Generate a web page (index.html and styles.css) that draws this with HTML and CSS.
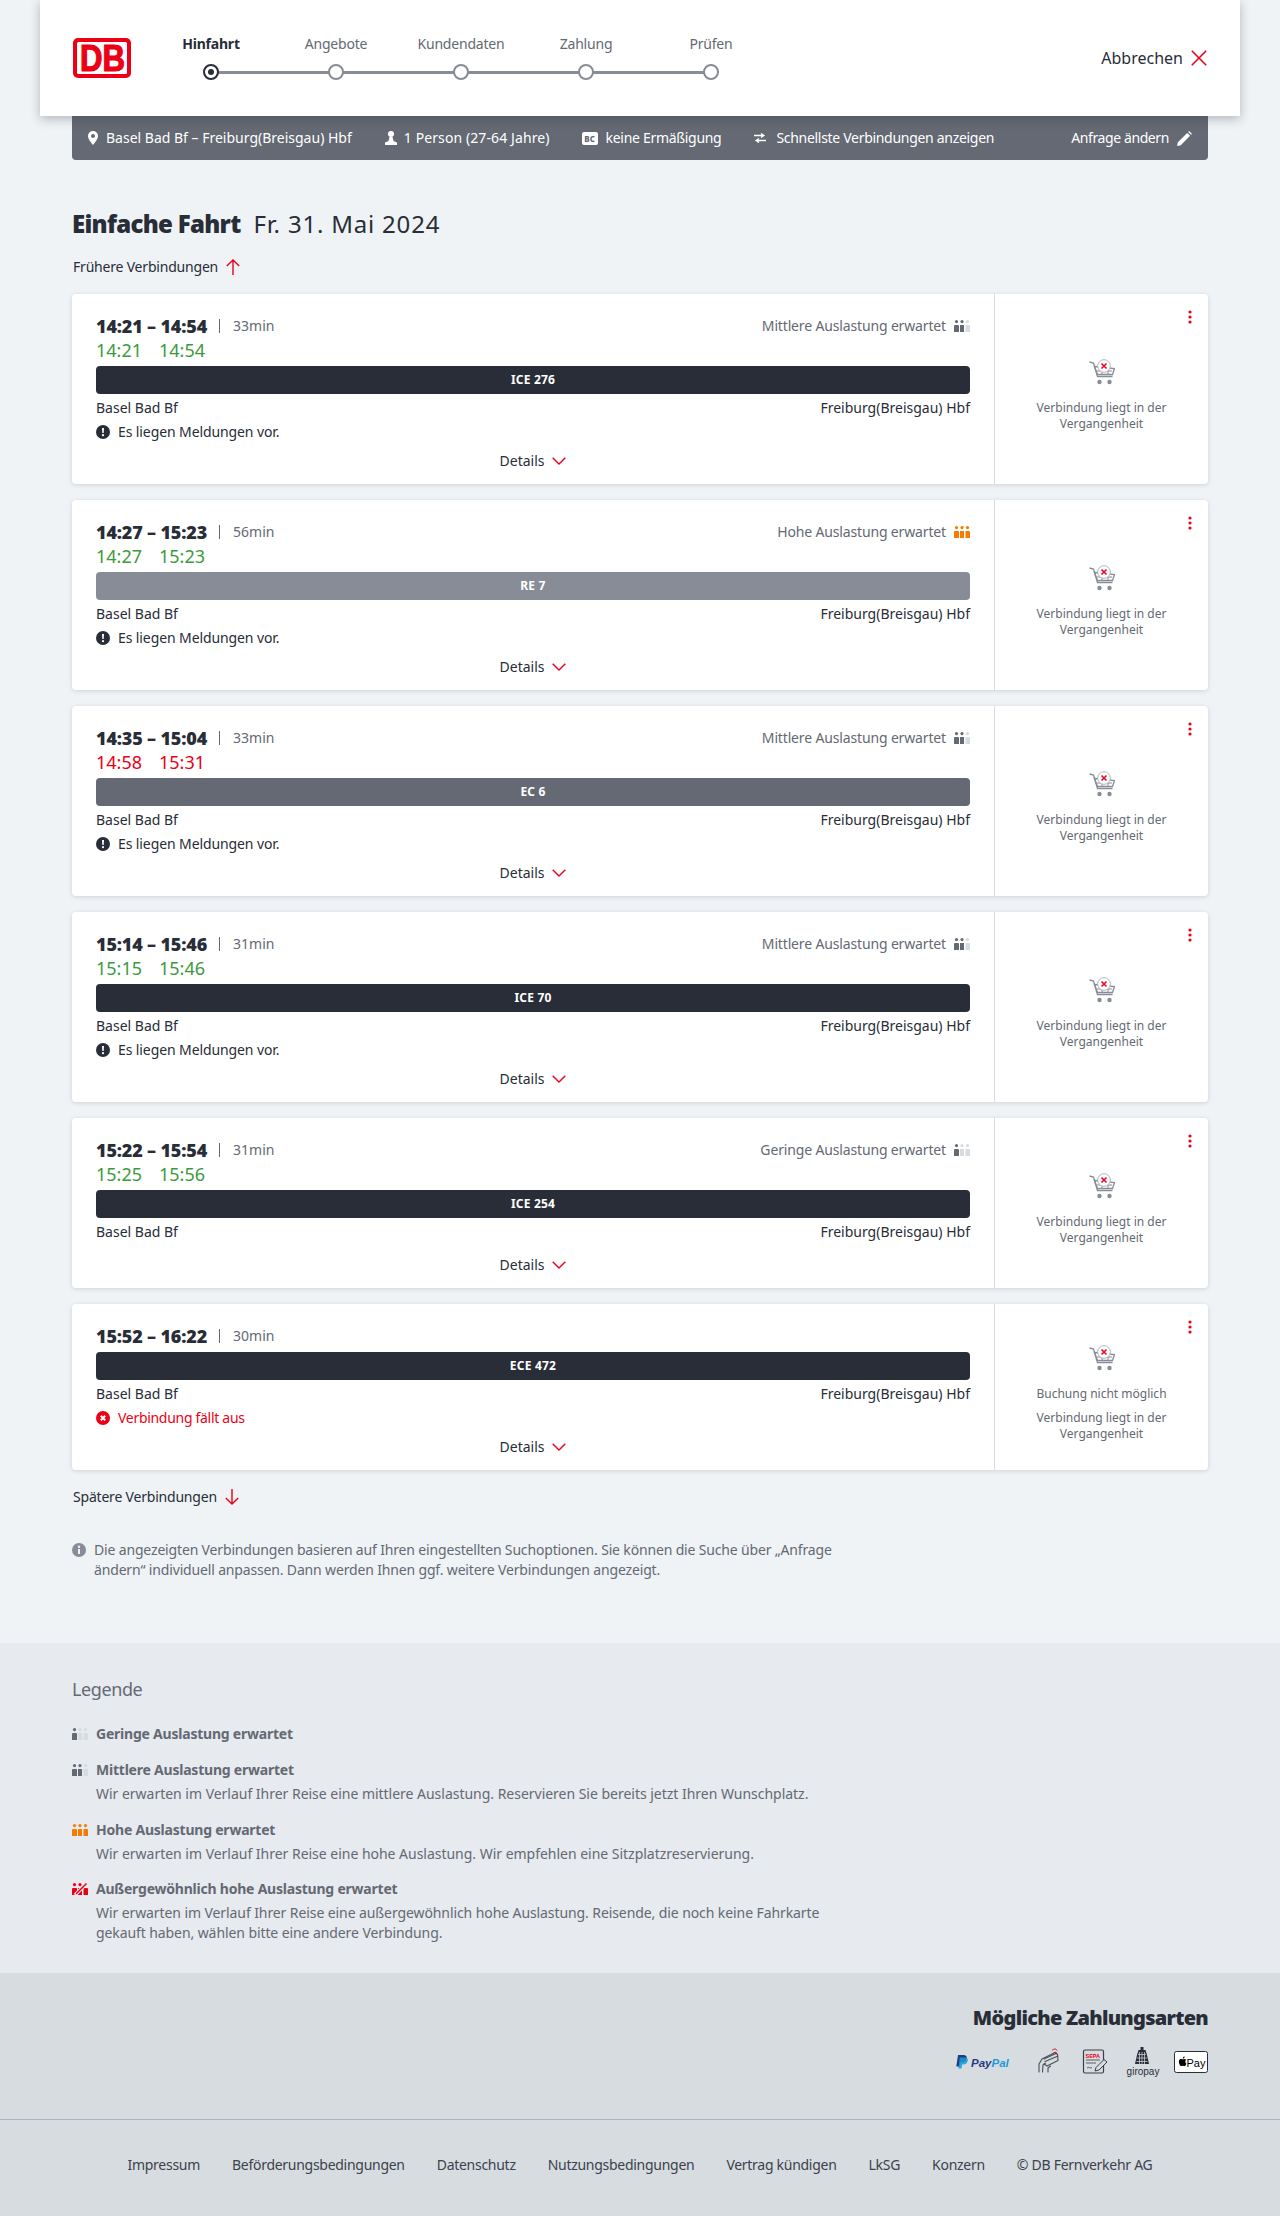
FILE: index.html
```html
<!DOCTYPE html>
<html lang="de">
<head>
<meta charset="utf-8">
<title>Verbindungen</title>
<link rel="stylesheet" href="styles.css">
</head>
<body>
<svg class="sprite" width="0" height="0" aria-hidden="true">
  <defs>
    <symbol id="occ" viewBox="0 0 16 12"><circle cx="2.5" cy="1.6" r="1.6"/><path d="M0 6a1 1 0 0 1 1-1h3a1 1 0 0 1 1 1v6H0z"/></symbol>
    <symbol id="occ2" viewBox="0 0 16 12"><circle cx="8" cy="1.6" r="1.6"/><path d="M6 5h4v7H6z"/></symbol>
    <symbol id="occ3" viewBox="0 0 16 12"><circle cx="13.5" cy="1.6" r="1.6"/><path d="M11.5 5h3.5a1 1 0 0 1 1 1v6h-4.500z"/></symbol>
    <symbol id="cart" viewBox="0 0 26 26">
      <path d="M0.500 3l4 1 4 13.500h15" fill="none" stroke="#878c96" stroke-width="1.300"/>
      <path d="M5.500 7.500l20 2-2 6h-15z" fill="none" stroke="#878c96" stroke-width="1.300"/>
      <path d="M8 12h15M13 9v7M19 9v7" stroke="#878c96" stroke-width="1"/>
      <circle cx="10.500" cy="23" r="2.200" fill="#878c96"/><circle cx="20.500" cy="23" r="2.200" fill="#878c96"/>
      <circle cx="15" cy="7" r="6.300" fill="#fff" stroke="#afb4bb" stroke-width="1"/>
      <path d="M12.500 4.500l5 5M17.500 4.500l-5 5" stroke="#ec0016" stroke-width="1.500"/>
    </symbol>
    <symbol id="chev" viewBox="0 0 14 8"><path d="M.7.8 7 7l6.300-6.200" fill="none" stroke="#ec0016" stroke-width="1.400"/></symbol>
    <symbol id="warn" viewBox="0 0 14 14"><circle cx="7" cy="7" r="7" fill="#282d37"/><path d="M6 3h2l-.3 5H6.300z" fill="#fff"/><circle cx="7" cy="10.200" r="1.100" fill="#fff"/></symbol>
    <symbol id="dots" viewBox="0 0 4 14"><circle cx="2" cy="2" r="1.600"/><circle cx="2" cy="7" r="1.600"/><circle cx="2" cy="12" r="1.600"/></symbol>
  </defs>
</svg>

<header class="top">
  <svg class="logo" viewBox="0 0 58 40" role="img" aria-label="DB">
    <rect width="58" height="40" rx="5" fill="#ec0016"/>
    <rect x="4" y="4" width="50" height="32" rx="1.500" fill="#fff"/>
    <text class="logo-text" x="7" y="33" textLength="45" lengthAdjust="spacingAndGlyphs">DB</text>
  </svg>
  <ol class="steps">
    <li class="step step-active"><span class="step-label">Hinfahrt</span><span class="step-dot"></span></li>
    <li class="step"><span class="step-label">Angebote</span><span class="step-dot"></span></li>
    <li class="step"><span class="step-label">Kundendaten</span><span class="step-dot"></span></li>
    <li class="step"><span class="step-label">Zahlung</span><span class="step-dot"></span></li>
    <li class="step"><span class="step-label">Prüfen</span><span class="step-dot"></span></li>
  </ol>
  <a class="cancel">Abbrechen
    <svg class="cancel-x" viewBox="0 0 16 16"><path d="M.8.8l14.400 14.400M15.200.8.800 15.200" fill="none" stroke="#ec0016" stroke-width="1.600"/></svg>
  </a>
</header>

<div class="query">
  <span class="q-item q-route"><svg class="q-ico-pin" viewBox="0 0 10 14"><path fill-rule="evenodd" fill="#fff" d="M5 0a5 5 0 0 1 5 5c0 3-3 6.500-5 9-2-2.500-5-6-5-9a5 5 0 0 1 5-5zm0 3a2 2 0 1 0 0 4 2 2 0 0 0 0-4z"/></svg>Basel Bad Bf – Freiburg(Breisgau) Hbf</span>
  <span class="q-item q-person"><svg class="q-ico-person" viewBox="0 0 12 14"><circle cx="6" cy="3" r="3" fill="#fff"/><path d="M4.500 6h3l1 4 3.500 1.500V14H0v-2.500L3.500 10z" fill="#fff"/></svg>1 Person (27-64 Jahre)</span>
  <span class="q-item q-bc"><span class="bc">BC</span>keine Ermäßigung</span>
  <span class="q-item q-fast"><svg class="q-ico-swap" viewBox="0 0 12 10"><path d="M0 2.500h9M7 .5l3 2-3 2M12 7.500H3M5 5.500l-3 2 3 2" fill="none" stroke="#fff" stroke-width="1.300"/></svg>Schnellste Verbindungen anzeigen</span>
  <span class="q-edit">Anfrage ändern<svg class="q-ico-pen" viewBox="0 0 14 14"><path d="M0 14l.8-3.500L9.500 1.800l2.700 2.700L3.500 13.200zM10.400.9 11.300 0 14 2.700l-.9.900z" fill="#fff"/></svg></span>
</div>

<main class="main">
  <h1 class="title"><strong>Einfache Fahrt</strong><span class="title-date">Fr. 31. Mai 2024</span></h1>
  <a class="more">Frühere Verbindungen<svg class="arrow" viewBox="0 0 14 16"><path d="M7 16V1M.8 7 7 1l6.200 6" fill="none" stroke="#ec0016" stroke-width="1.400"/></svg></a>

  <section class="results">
    <article class="card">
      <div class="info">
        <div class="row-time"><span class="times">14:21 – 14:54</span><span class="dur">33min</span><span class="load">Mittlere Auslastung erwartet<svg class="occ"><use href="#occ" class="o-d"/><use href="#occ2" class="o-d"/><use href="#occ3" class="o-l"/></svg></span></div>
        <div class="real real-ok"><span>14:21</span><span>14:54</span></div>
        <div class="train train-dark">ICE 276</div>
        <div class="stations"><span>Basel Bad Bf</span><span>Freiburg(Breisgau) Hbf</span></div>
        <div class="msg"><svg class="msg-ico"><use href="#warn"/></svg>Es liegen Meldungen vor.</div>
        <div class="details">Details<svg class="chev"><use href="#chev"/></svg></div>
      </div>
      <aside class="side"><svg class="dots"><use href="#dots"/></svg><svg class="cart"><use href="#cart"/></svg><p class="side-note">Verbindung liegt in der<br>Vergangenheit</p></aside>
    </article>

    <article class="card">
      <div class="info">
        <div class="row-time"><span class="times">14:27 – 15:23</span><span class="dur">56min</span><span class="load">Hohe Auslastung erwartet<svg class="occ"><use href="#occ" class="o-h"/><use href="#occ2" class="o-h"/><use href="#occ3" class="o-h"/></svg></span></div>
        <div class="real real-ok"><span>14:27</span><span>15:23</span></div>
        <div class="train train-light">RE 7</div>
        <div class="stations"><span>Basel Bad Bf</span><span>Freiburg(Breisgau) Hbf</span></div>
        <div class="msg"><svg class="msg-ico"><use href="#warn"/></svg>Es liegen Meldungen vor.</div>
        <div class="details">Details<svg class="chev"><use href="#chev"/></svg></div>
      </div>
      <aside class="side"><svg class="dots"><use href="#dots"/></svg><svg class="cart"><use href="#cart"/></svg><p class="side-note">Verbindung liegt in der<br>Vergangenheit</p></aside>
    </article>

    <article class="card">
      <div class="info">
        <div class="row-time"><span class="times">14:35 – 15:04</span><span class="dur">33min</span><span class="load">Mittlere Auslastung erwartet<svg class="occ"><use href="#occ" class="o-d"/><use href="#occ2" class="o-d"/><use href="#occ3" class="o-l"/></svg></span></div>
        <div class="real real-late"><span>14:58</span><span>15:31</span></div>
        <div class="train train-mid">EC 6</div>
        <div class="stations"><span>Basel Bad Bf</span><span>Freiburg(Breisgau) Hbf</span></div>
        <div class="msg"><svg class="msg-ico"><use href="#warn"/></svg>Es liegen Meldungen vor.</div>
        <div class="details">Details<svg class="chev"><use href="#chev"/></svg></div>
      </div>
      <aside class="side"><svg class="dots"><use href="#dots"/></svg><svg class="cart"><use href="#cart"/></svg><p class="side-note">Verbindung liegt in der<br>Vergangenheit</p></aside>
    </article>

    <article class="card">
      <div class="info">
        <div class="row-time"><span class="times">15:14 – 15:46</span><span class="dur">31min</span><span class="load">Mittlere Auslastung erwartet<svg class="occ"><use href="#occ" class="o-d"/><use href="#occ2" class="o-d"/><use href="#occ3" class="o-l"/></svg></span></div>
        <div class="real real-ok"><span>15:15</span><span>15:46</span></div>
        <div class="train train-dark">ICE 70</div>
        <div class="stations"><span>Basel Bad Bf</span><span>Freiburg(Breisgau) Hbf</span></div>
        <div class="msg"><svg class="msg-ico"><use href="#warn"/></svg>Es liegen Meldungen vor.</div>
        <div class="details">Details<svg class="chev"><use href="#chev"/></svg></div>
      </div>
      <aside class="side"><svg class="dots"><use href="#dots"/></svg><svg class="cart"><use href="#cart"/></svg><p class="side-note">Verbindung liegt in der<br>Vergangenheit</p></aside>
    </article>

    <article class="card">
      <div class="info">
        <div class="row-time"><span class="times">15:22 – 15:54</span><span class="dur">31min</span><span class="load">Geringe Auslastung erwartet<svg class="occ"><use href="#occ" class="o-d"/><use href="#occ2" class="o-l"/><use href="#occ3" class="o-l"/></svg></span></div>
        <div class="real real-ok"><span>15:25</span><span>15:56</span></div>
        <div class="train train-dark">ICE 254</div>
        <div class="stations stations-last"><span>Basel Bad Bf</span><span>Freiburg(Breisgau) Hbf</span></div>
        <div class="details">Details<svg class="chev"><use href="#chev"/></svg></div>
      </div>
      <aside class="side"><svg class="dots"><use href="#dots"/></svg><svg class="cart"><use href="#cart"/></svg><p class="side-note">Verbindung liegt in der<br>Vergangenheit</p></aside>
    </article>

    <article class="card">
      <div class="info">
        <div class="row-time"><span class="times">15:52 – 16:22</span><span class="dur">30min</span></div>
        <div class="train train-dark">ECE 472</div>
        <div class="stations"><span>Basel Bad Bf</span><span>Freiburg(Breisgau) Hbf</span></div>
        <div class="msg msg-cancel"><svg class="msg-ico" viewBox="0 0 14 14"><circle cx="7" cy="7" r="7" fill="#ec0016"/><path d="M4.800 4.800l4.400 4.400M9.200 4.800l-4.400 4.400" stroke="#fff" stroke-width="2"/></svg>Verbindung fällt aus</div>
        <div class="details">Details<svg class="chev"><use href="#chev"/></svg></div>
      </div>
      <aside class="side"><svg class="dots"><use href="#dots"/></svg><svg class="cart"><use href="#cart"/></svg><p class="side-note side-note-first">Buchung nicht möglich</p><p class="side-note side-note-second">Verbindung liegt in der<br>Vergangenheit</p></aside>
    </article>
  </section>

  <a class="more">Spätere Verbindungen<svg class="arrow" viewBox="0 0 14 16"><path d="M7 0v15M.8 9 7 15l6.200-6" fill="none" stroke="#ec0016" stroke-width="1.400"/></svg></a>

  <p class="note"><svg class="note-ico" viewBox="0 0 14 14"><circle cx="7" cy="7" r="7" fill="#878c96"/><circle cx="7" cy="3.800" r="1.200" fill="#eff3f6"/><path d="M6 6h2v5H6z" fill="#eff3f6"/></svg>Die angezeigten Verbindungen basieren auf Ihren eingestellten Suchoptionen. Sie können die Suche über „Anfrage<br>ändern“ individuell anpassen. Dann werden Ihnen ggf. weitere Verbindungen angezeigt.</p>
</main>

<section class="legend">
  <h2 class="legend-title">Legende</h2>
  <div class="legend-item legend-first">
    <h3 class="legend-head"><svg class="occ"><use href="#occ" class="o-d"/><use href="#occ2" class="o-l"/><use href="#occ3" class="o-l"/></svg>Geringe Auslastung erwartet</h3>
  </div>
  <div class="legend-item">
    <h3 class="legend-head"><svg class="occ"><use href="#occ" class="o-d"/><use href="#occ2" class="o-d"/><use href="#occ3" class="o-l"/></svg>Mittlere Auslastung erwartet</h3>
    <p class="legend-text">Wir erwarten im Verlauf Ihrer Reise eine mittlere Auslastung. Reservieren Sie bereits jetzt Ihren Wunschplatz.</p>
  </div>
  <div class="legend-item">
    <h3 class="legend-head"><svg class="occ"><use href="#occ" class="o-h"/><use href="#occ2" class="o-h"/><use href="#occ3" class="o-h"/></svg>Hohe Auslastung erwartet</h3>
    <p class="legend-text">Wir erwarten im Verlauf Ihrer Reise eine hohe Auslastung. Wir empfehlen eine Sitzplatzreservierung.</p>
  </div>
  <div class="legend-item legend-tight">
    <h3 class="legend-head"><svg class="occ"><use href="#occ" class="o-x"/><use href="#occ2" class="o-x"/><use href="#occ3" class="o-x"/><path d="M15 0 3 12" stroke="#e7eaef" stroke-width="3.500"/><path d="M14.500 .5 4 11" stroke="#ec0016" stroke-width="1.500"/></svg>Außergewöhnlich hohe Auslastung erwartet</h3>
    <p class="legend-text">Wir erwarten im Verlauf Ihrer Reise eine außergewöhnlich hohe Auslastung. Reisende, die noch keine Fahrkarte<br>gekauft haben, wählen bitte eine andere Verbindung.</p>
  </div>
</section>

<section class="pay">
  <h2 class="pay-title">Mögliche Zahlungsarten</h2>
  <div class="pay-icons">
    <svg class="pay-paypal" viewBox="0 0 61 16" role="img" aria-label="PayPal">
      <path d="M3 1h5.500c2.500 0 3.600 1.400 3.200 3.400-.5 2.600-2.300 3.800-4.500 3.800H5.500L4.700 12.500H1.300z" fill="#253b80"/>
      <path d="M4.800 3.500h5c2.300 0 3.400 1.300 3 3.300-.5 2.500-2.200 3.600-4.300 3.600H7.200l-.7 4H3.300z" fill="#179bd7" opacity=".85"/>
      <text class="pp-text" x="16" y="12.500"><tspan fill="#253b80">Pay</tspan><tspan fill="#179bd7">Pal</tspan></text>
    </svg>
    <svg class="pay-card" viewBox="0 0 36 32" role="img" aria-label="Kontaktlos">
      <g fill="none" stroke="#4a4f58" stroke-width="1.100" stroke-linejoin="round" stroke-linecap="round">
        <path d="M9 26v-8l3-5 13-6.500 2.500 2 .5 6-11 5.500-3-2"/><path d="M14 13l12-5.500M15 15.500 28 10"/>
        <path d="M12.500 26l.5-7 2.500-2M18 26v-4l2.500-2"/>
      </g>
      <path d="M22 4.500c2-2 4-2 5 0M23.500 7c1.500-1 3-1 3.500 .5" fill="none" stroke="#ec0016" stroke-width="1"/>
    </svg>
    <svg class="pay-sepa" viewBox="0 0 30 28" role="img" aria-label="SEPA">
      <rect x="3.500" y="2" width="20" height="23" rx="1.500" fill="none" stroke="#3a3f49" stroke-width="1.200"/>
      <text class="sepa-text" x="5.500" y="9.500">SEPA</text>
      <path d="M6 12h14M6 15h10M7 20c2-2 3 1 5-.5" fill="none" stroke="#3a3f49" stroke-width=".8"/>
      <path d="M15 23l1-3.500 8-8 3 2.500-8 8z" fill="#d7dce1" stroke="#3a3f49" stroke-width="1"/>
    </svg>
    <svg class="pay-giro" viewBox="0 0 36 32" role="img" aria-label="giropay">
      <path d="M16.500 1h3v3h2l1.500 5 2 9H11l2-9 1.500-5h2z" fill="#282d37"/>
      <path d="M14 8.500h8M13 12h10M12.500 15.500h11M15.500 6v12M18 6v12M20.500 6v12" stroke="#d7dce1" stroke-width=".7"/>
      <text class="giro-text" x="19" y="29">giropay</text>
    </svg>
    <svg class="pay-apple" viewBox="0 0 34 22" role="img" aria-label="Apple Pay">
      <rect x=".5" y=".5" width="33" height="21" rx="2" fill="#fff" stroke="#282d37"/>
      <path transform="translate(1.500)" d="M9.800 10.600c0-1.200 1-1.800 1-1.800-.6-.8-1.400-.9-1.700-.9-.7-.1-1.400.4-1.800.4s-1-.4-1.600-.4c-.8 0-1.600.5-2 1.200-.8 1.500-.2 3.600.6 4.800.4.600.9 1.200 1.500 1.200s.8-.4 1.500-.4 .9.400 1.500.4 1.100-.6 1.400-1.200c.5-.7.600-1.300.6-1.400-.1 0-1-.5-1-1.900zM8.700 6.900c.3-.4.5-1 .500-1.500-.5 0-1.100.3-1.400.7-.3.300-.6.900-.5 1.400.5 0 1.100-.2 1.400-.6z" fill="#000"/>
      <text class="apple-text" x="12.500" y="15.500">Pay</text>
    </svg>
  </div>
</section>

<footer class="foot">
  <a>Impressum</a><a>Beförderungsbedingungen</a><a>Datenschutz</a><a>Nutzungsbedingungen</a><a>Vertrag kündigen</a><a>LkSG</a><a>Konzern</a><span>© DB Fernverkehr AG</span>
</footer>
</body>
</html>
```
FILE: styles.css
```css
* { box-sizing: border-box; }
html, body { margin: 0; padding: 0; }
body {
  background: #eff3f6;
  color: #282d37;
  font-family: "Noto Sans", "Open Sans", sans-serif;
  font-size: 14px;
  line-height: 20px;
  width: 1280px;
  min-height: 2216px;
}
h1, h2, h3, p, ol { margin: 0; padding: 0; }
li { list-style: none; }
svg { display: block; flex: none; }
.sprite { position: absolute; }

/* header */
.top {
  position: relative;
  z-index: 2;
  display: flex;
  height: 116px;
  margin: 0 40px;
  padding: 0 33px;
  background: #fff;
  box-shadow: 0 3px 10px rgba(40, 45, 55, .3);
}
.logo { width: 58px; height: 40px; margin-top: 38px; overflow: visible; }
.logo-text { font: 700 36px "Liberation Sans", sans-serif; fill: #ec0016; stroke: #ec0016; stroke-width: 1.200px; }
.steps { display: flex; margin: 34px 0 0 17.500px; }
.step {
  position: relative;
  display: flex;
  flex-direction: column;
  align-items: center;
  width: 125px;
  gap: 10px;
  color: #646973;
  letter-spacing: -.2px;
}
.step:not(:last-child)::after {
  content: "";
  position: absolute;
  left: 50%;
  top: 36.500px;
  width: 100%;
  height: 3px;
  background: #878c96;
}
.step-label { white-space: nowrap; }
.step-dot {
  position: relative;
  z-index: 1;
  width: 16px;
  height: 16px;
  border: 2.500px solid #878c96;
  border-radius: 50%;
  background: #fff;
}
.step-active { color: #282d37; font-weight: 700; }
.step-active .step-dot { border-color: #282d37; }
.step-active .step-dot::after {
  content: "";
  display: block;
  width: 6px;
  height: 6px;
  margin: 2.500px;
  border-radius: 50%;
  background: #282d37;
}
.cancel {
  display: flex;
  align-items: center;
  gap: 8px;
  margin-left: auto;
  font-size: 16px;
}
.cancel-x { width: 16px; height: 16px; }

/* query bar */
.query {
  display: flex;
  align-items: center;
  height: 44px;
  margin: 0 72px;
  padding: 0 16px;
  background: #646973;
  border-radius: 0 0 4px 4px;
  color: #fff;
  white-space: nowrap;
}
.q-item { display: flex; align-items: center; margin-right: 32px; }
.q-route { margin-right: 33px; }
.q-person { letter-spacing: .1px; }
.q-bc { margin-right: 33px; letter-spacing: -.3px; }
.q-fast { letter-spacing: -.3px; }
.q-ico-pin { width: 10px; height: 14px; margin-right: 8px; }
.q-ico-person { width: 12px; height: 14px; margin-right: 7px; }
.q-ico-swap { width: 12px; height: 10px; margin-right: 10px; }
.q-ico-pen { width: 15px; height: 15px; margin-left: 8px; }
.bc {
  width: 16px;
  height: 13px;
  margin-right: 8px;
  border-radius: 2px;
  background: #fff;
  color: #646973;
  font-size: 8px;
  font-weight: 800;
  letter-spacing: 0;
  line-height: 13px;
  text-align: center;
}
.q-edit { display: flex; align-items: center; margin-left: auto; letter-spacing: -.4px; }

/* main */
.main { padding: 48px 72px 63px; }
.title { display: flex; font-size: 24px; font-weight: 400; line-height: 32px; }
.title strong { font-weight: 900; letter-spacing: -.7px; }
.title-date { margin-left: 13px; letter-spacing: .8px; }
.more {
  display: flex;
  align-items: center;
  gap: 8px;
  height: 24px;
  margin: 15px 0;
  padding-left: 1px;
  letter-spacing: -.2px;
}
.arrow { width: 14px; height: 16px; }

/* cards */
.results { display: flex; flex-direction: column; gap: 16px; }
.card {
  display: flex;
  background: #fff;
  border-radius: 4px;
  box-shadow: 0 1px 4px rgba(40, 45, 55, .16);
}
.info { flex: none; width: 923px; padding: 20px 24px 11px; border-right: 1px solid #d7dce1; }
.row-time { display: flex; align-items: center; height: 24px; }
.times { font-size: 18px; font-weight: 900; letter-spacing: -.16px; }
.dur {
  margin-left: 12px;
  padding-left: 14px;
  color: #646973;
  background: linear-gradient(#646973, #646973) 0 50% / 1px 14px no-repeat;
}
.load { display: flex; align-items: center; gap: 8px; margin-left: auto; color: #646973; letter-spacing: -.15px; }
.occ { width: 16px; height: 12px; }
.o-d { fill: #646973; }
.o-l { fill: #d7dce1; }
.o-h { fill: #f57c00; }
.o-x { fill: #ec0016; }
.real { display: flex; gap: 17px; height: 24px; font-size: 18px; line-height: 24px; }
.real-ok { color: #3c9a3c; }
.real-late { color: #ec0016; }
.train {
  height: 28px;
  margin-top: 4px;
  border-radius: 4px;
  color: #fff;
  font-size: 12px;
  font-weight: 700;
  letter-spacing: .2px;
  line-height: 28px;
  text-align: center;
}
.train-dark { background: #282d37; }
.train-mid { background: #646973; }
.train-light { background: #878c96; }
.stations { display: flex; justify-content: space-between; height: 24px; margin-top: 2px; line-height: 24px; }
.stations-last { margin-bottom: 9px; }
.msg { display: flex; align-items: center; gap: 8px; height: 24px; letter-spacing: -.1px; }
.msg-ico { width: 14px; height: 14px; }
.msg-cancel { color: #ec0016; letter-spacing: -.3px; }
.details { display: flex; align-items: center; justify-content: center; gap: 8px; height: 24px; margin-top: 5px; }
.chev { width: 14px; height: 8px; }

/* side */
.side {
  position: relative;
  flex: 1;
  display: flex;
  flex-direction: column;
  align-items: center;
  justify-content: center;
  padding-top: 12px;
  color: #646973;
  font-size: 12px;
  line-height: 16px;
  text-align: center;
}
.dots { position: absolute; top: 16px; right: 16px; width: 4px; height: 14px; fill: #ec0016; }
.cart { width: 26px; height: 26px; margin-bottom: 15px; }
.side-note-first { margin-bottom: 8px; }

/* note */
.note {
  position: relative;
  margin-top: 31px;
  padding-left: 22px;
  color: #646973;
  letter-spacing: -.16px;
  white-space: nowrap;
}
.note-ico { position: absolute; left: 0; top: 3px; width: 14px; height: 14px; }

/* legend */
.legend {
  height: 330px;
  padding: 32px 72px 0;
  background: #e7eaef;
  color: #646973;
}
.legend-title { font-size: 18px; font-weight: 400; letter-spacing: -.4px; line-height: 28px; }
.legend-item { margin-top: 16px; }
.legend-first { margin-top: 21px; }
.legend-tight { margin-top: 15px; }
.legend-head { display: flex; align-items: center; gap: 8px; font-size: 14px; font-weight: 700; letter-spacing: -.22px; line-height: 20px; }
.legend-text { margin-top: 4px; padding-left: 24px; letter-spacing: -.02px; white-space: nowrap; }
.legend-tight .legend-text { letter-spacing: -.09px; }

/* payment */
.pay {
  height: 147px;
  padding: 31px 72px 0;
  background: #d7dce1;
  border-bottom: 1px solid #afb4bb;
}
.pay-title { font-size: 20px; font-weight: 900; letter-spacing: -.72px; line-height: 28px; text-align: right; }
.pay-icons { display: flex; justify-content: flex-end; align-items: center; gap: 14px; height: 32px; margin-top: 14px; }
.pay-paypal { width: 61px; height: 16px; }
.pay-card { width: 36px; height: 32px; }
.pay-sepa { width: 30px; height: 28px; }
.pay-giro { width: 36px; height: 32px; }
.pay-apple { width: 34px; height: 22px; }
.pp-text { font: italic 700 11.500px "Liberation Sans", sans-serif; }
.sepa-text { font: 700 5.500px "Liberation Sans", sans-serif; fill: #ec0016; }
.giro-text { font: 400 10px "Liberation Sans", sans-serif; fill: #282d37; text-anchor: middle; }
.apple-text { font: 400 11px "Liberation Sans", sans-serif; fill: #000; }

/* footer */
.foot {
  display: flex;
  justify-content: center;
  gap: 32px;
  height: 96px;
  padding-top: 35px;
  background: #d7dce1;
  color: #3c414b;
  letter-spacing: -.28px;
}
```
